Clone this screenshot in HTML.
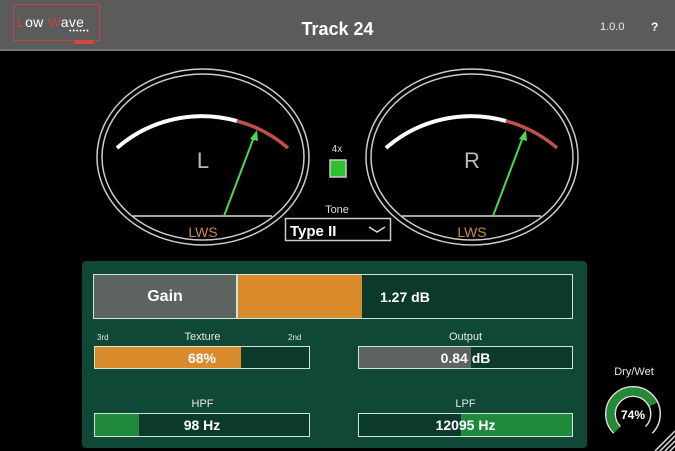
<!DOCTYPE html>
<html><head><style>
body{margin:0;width:675px;height:451px;background:#000;overflow:hidden;font-family:"Liberation Sans",sans-serif;position:relative}
.hdr{position:absolute;left:0;top:0;width:675px;height:49px;background:#5b5b5b;border-bottom:2px solid #777}
.abs{position:absolute}
.bar{position:absolute;border:1.5px solid #cfe3d8;background:#0b3a2c;box-sizing:border-box;overflow:hidden}
.lbl{position:absolute;color:#e8e8e8;font-size:11px;text-align:center}
.val{position:absolute;color:#fff;font-weight:bold;font-size:14px;width:100%;text-align:center;top:3px}
</style></head><body>
<div class="hdr"></div>
<div class="abs" style="left:13px;top:4px;width:87px;height:37px;border:1px solid #c0473f;box-sizing:border-box"></div>
<div class="abs" style="left:17px;top:14px;font-size:14px;color:#fff;letter-spacing:0.3px"><span style="color:#c0473f">L</span>ow <span style="color:#c0473f">W</span>ave</div>
<div class="abs" style="left:69px;top:28px;font-size:7px;color:#fff;letter-spacing:1px">••••••</div>
<div class="abs" style="left:74px;top:40px;width:20px;height:4px;background:#d04a40"></div>
<div class="abs" style="left:0;width:675px;top:19px;text-align:center;color:#fff;font-weight:bold;font-size:18px">Track 24</div>
<div class="abs" style="left:600px;top:21px;color:#eee;font-size:11px">1.0.0</div>
<div class="abs" style="left:651px;top:20px;color:#fff;font-weight:bold;font-size:12px">?</div>

<svg class="abs" style="left:0;top:0" width="675" height="451">
<g fill="none">
<ellipse cx="203" cy="157" rx="106" ry="88" stroke="#ccc" stroke-width="1.5"/>
<ellipse cx="203" cy="157" rx="101" ry="83" stroke="#ccc" stroke-width="1.5"/>
<line x1="133" y1="216" x2="272" y2="216" stroke="#ddd" stroke-width="1.5"/>
<path d="M117,148 A129,129 0 0 1 237,121" stroke="#fff" stroke-width="4"/>
<path d="M237,121 A129,129 0 0 1 288,148" stroke="#c0504a" stroke-width="3.5"/>
<line x1="224" y1="216" x2="254" y2="137" stroke="#4bd35a" stroke-width="2"/>
<path d="M257,130 L250,139 L258,141Z" fill="#4bd35a"/>
<text x="203" y="168" fill="#bbb" font-size="22" text-anchor="middle" font-family="Liberation Sans">L</text>
<text x="203" y="237" fill="#c98a44" font-size="14" text-anchor="middle" font-family="Liberation Sans">LWS</text>
</g>
<g fill="none" transform="translate(269,0)">
<ellipse cx="203" cy="157" rx="106" ry="88" stroke="#ccc" stroke-width="1.5"/>
<ellipse cx="203" cy="157" rx="101" ry="83" stroke="#ccc" stroke-width="1.5"/>
<line x1="133" y1="216" x2="272" y2="216" stroke="#ddd" stroke-width="1.5"/>
<path d="M117,148 A129,129 0 0 1 237,121" stroke="#fff" stroke-width="4"/>
<path d="M237,121 A129,129 0 0 1 288,148" stroke="#c0504a" stroke-width="3.5"/>
<line x1="224" y1="216" x2="254" y2="137" stroke="#4bd35a" stroke-width="2"/>
<path d="M257,130 L250,139 L258,141Z" fill="#4bd35a"/>
<text x="203" y="168" fill="#bbb" font-size="22" text-anchor="middle" font-family="Liberation Sans">R</text>
<text x="203" y="237" fill="#c98a44" font-size="14" text-anchor="middle" font-family="Liberation Sans">LWS</text>
</g>
<text x="337" y="152" fill="#ddd" font-size="10" text-anchor="middle" font-family="Liberation Sans">4x</text>
<rect x="330" y="160" width="16" height="17" fill="#2ec02e" stroke="#ccc" stroke-width="1.5"/>
<text x="337" y="213" fill="#ddd" font-size="11" text-anchor="middle" font-family="Liberation Sans">Tone</text>
<rect x="285.5" y="218.5" width="105" height="22" fill="#000" stroke="#ccc" stroke-width="1.5"/>
<text x="290" y="236" fill="#fff" font-size="15" font-weight="bold" font-family="Liberation Sans">Type II</text>
<path d="M369,227 L377,232 L385,227" stroke="#ddd" stroke-width="1.5" fill="none"/>
</svg>

<div class="abs" style="left:82px;top:261px;width:505px;height:187px;background:#0f4836;border-radius:4px"></div>
<div class="bar" style="left:93px;top:274px;width:480px;height:45px">
<div class="abs" style="left:0;top:0;width:142px;height:43px;background:#5d635f;border-right:2px solid #cfe3d8"></div>
<div class="abs" style="left:144px;top:0;width:124px;height:43px;background:#d98b2b"></div>
<div class="abs" style="left:0;width:142px;top:13px;text-align:center;color:#fff;font-size:16px;font-weight:bold">Gain</div>
<div class="abs" style="left:286px;top:14px;color:#fff;font-size:14px;font-weight:bold">1.27 dB</div>
</div>
<div class="lbl" style="left:97px;top:333px;font-size:8px">3rd</div>
<div class="lbl" style="left:288px;top:333px;font-size:8px">2nd</div>
<div class="lbl" style="left:95px;width:215px;top:331px">Texture</div>
<div class="bar" style="left:94px;top:346px;width:216px;height:23px"><div class="abs" style="left:0;top:0;width:146px;height:21px;background:#d98b2b"></div><div class="val">68%</div></div>
<div class="lbl" style="left:358px;width:215px;top:331px">Output</div>
<div class="bar" style="left:358px;top:346px;width:215px;height:23px"><div class="abs" style="left:0;top:0;width:112px;height:21px;background:#5d635f"></div><div class="val">0.84 dB</div></div>
<div class="lbl" style="left:95px;width:215px;top:398px">HPF</div>
<div class="bar" style="left:94px;top:413px;width:216px;height:24px"><div class="abs" style="left:0;top:0;width:44px;height:22px;background:#1f8a3c"></div><div class="val">98 Hz</div></div>
<div class="lbl" style="left:358px;width:215px;top:398px">LPF</div>
<div class="bar" style="left:358px;top:413px;width:215px;height:24px"><div class="abs" style="left:102px;top:0;width:113px;height:22px;background:#1f8a3c"></div><div class="val">12095 Hz</div></div>

<div class="lbl" style="left:603px;width:62px;top:366px">Dry/Wet</div>
<svg class="abs" style="left:0;top:0" width="675" height="451">
<path d="M617.1,429.9 A22.5,22.5 0 1 1 648.9,429.9" stroke="#ddd" stroke-width="11" fill="none"/>
<path d="M617.1,429.9 A22.5,22.5 0 1 1 648.9,429.9" stroke="#000" stroke-width="8" fill="none"/>
<path d="M617.1,429.9 A22.5,22.5 0 1 1 653.4,404.5" stroke="#238a36" stroke-width="8" fill="none"/>
<text x="633" y="419" fill="#fff" font-size="12" font-weight="bold" text-anchor="middle" font-family="Liberation Sans">74%</text>
<g stroke="#ddd" stroke-width="1.5">
<line x1="660" y1="451" x2="675" y2="436"/><line x1="665" y1="451" x2="675" y2="441"/><line x1="670" y1="451" x2="675" y2="446"/><line x1="655" y1="451" x2="675" y2="431"/>
</g>
</svg>
</body></html>
